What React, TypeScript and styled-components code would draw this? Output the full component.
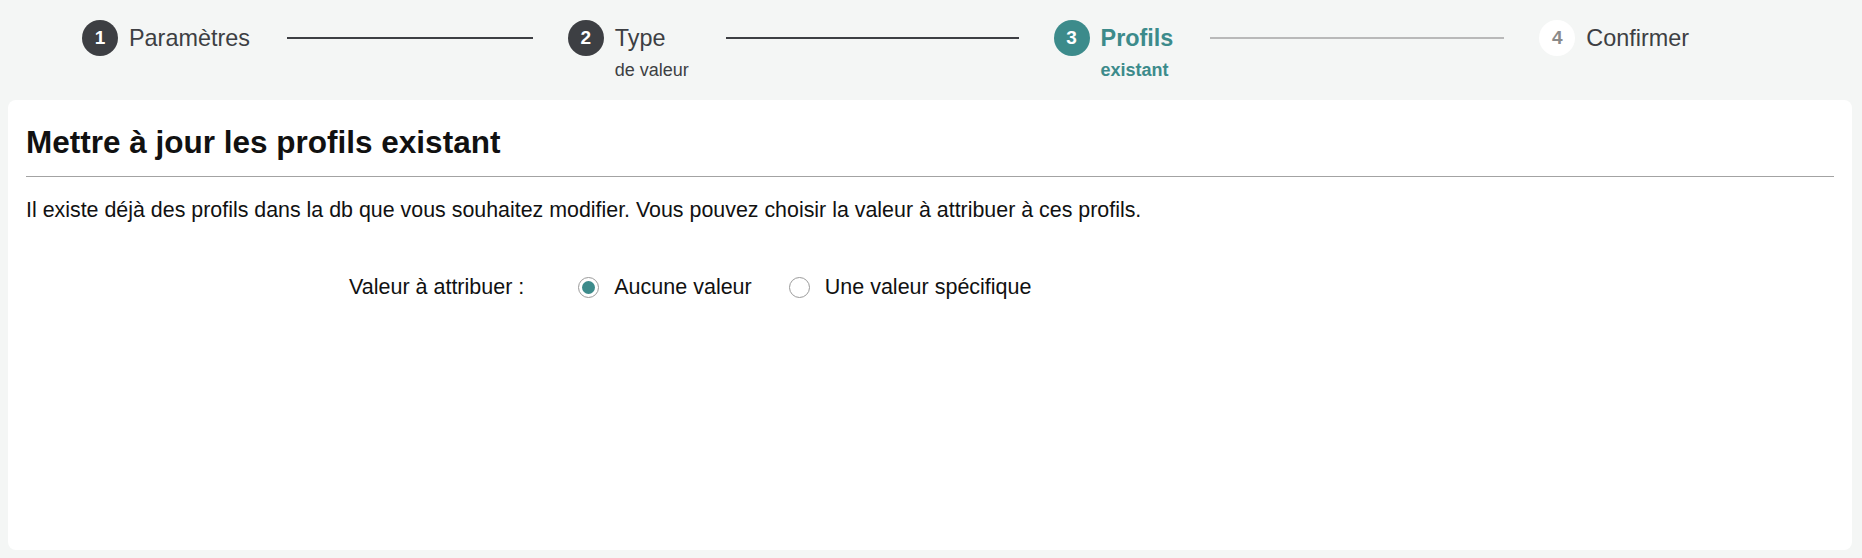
import React from 'react';
import styled, { createGlobalStyle } from 'styled-components';

const GlobalStyle = createGlobalStyle`
  html, body {
    margin: 0;
    padding: 0;
    background: #f4f6f5;
    font-family: 'Liberation Sans', Arial, sans-serif;
    color: #1a1a1a;
  }
`;

type StepStatus = 'finish' | 'process' | 'wait';

interface StepItem {
  title: string;
  description?: string;
  status: StepStatus;
}

const steps: StepItem[] = [
  { title: 'Paramètres', status: 'finish' },
  { title: 'Type', description: 'de valeur', status: 'finish' },
  { title: 'Profils', description: 'existant', status: 'process' },
  { title: 'Confirmer', status: 'wait' },
];

const App: React.FC = () => {
  return (
    <Page>
      <GlobalStyle />
      <StyleSteps>
        {steps.map((step, i) => {
          const last = i === steps.length - 1;
          return (
            <StyleStep key={step.title} last={last}>
              <StyleStepIcon status={step.status}>{i + 1}</StyleStepIcon>
              <StyleStepContent>
                <StyleStepTitle status={step.status}>{step.title}</StyleStepTitle>
                {step.description && (
                  <StyleStepDesc status={step.status}>{step.description}</StyleStepDesc>
                )}
              </StyleStepContent>
              {!last && <StyleTail done={step.status === 'finish'} />}
            </StyleStep>
          );
        })}
      </StyleSteps>

      <StyleCard>
        <StyleHeading>Mettre à jour les profils existant</StyleHeading>
        <StyleText>
          Il existe déjà des profils dans la db que vous souhaitez modifier. Vous pouvez choisir la
          valeur à attribuer à ces profils.
        </StyleText>
        <StyleFormRow>
          <StyleLabel>Valeur à attribuer :</StyleLabel>
          <StyleRadioGroup>
            <StyleRadio>
              <StyleRadioDot checked />
              Aucune valeur
            </StyleRadio>
            <StyleRadio>
              <StyleRadioDot />
              Une valeur spécifique
            </StyleRadio>
          </StyleRadioGroup>
        </StyleFormRow>
      </StyleCard>
    </Page>
  );
};

const Page = styled.div`
  display: flex;
  flex-direction: column;
  height: 558px;
`;

const StyleSteps = styled.div`
  display: flex;
  align-items: flex-start;
  height: 100px;
  box-sizing: border-box;
  padding: 20px 173px 0 82px;
`;

const StyleStep = styled.div<{ last?: boolean }>`
  display: flex;
  align-items: flex-start;
  flex: ${(props) => (props.last ? 'none' : '1')};
`;

const StyleStepIcon = styled.span<{ status: StepStatus }>`
  flex: none;
  width: 36px;
  height: 36px;
  border-radius: 50%;
  display: inline-flex;
  align-items: center;
  justify-content: center;
  font-size: 19px;
  font-weight: bold;
  background: ${(props) =>
    props.status === 'finish' ? '#3d3f43' : props.status === 'process' ? '#3c8b8b' : '#fff'};
  color: ${(props) => (props.status === 'wait' ? '#8a8a8a' : '#fff')};
  margin-right: 11px;
`;

const StyleStepContent = styled.div`
  display: flex;
  flex-direction: column;
`;

const StyleStepTitle = styled.div<{ status: StepStatus }>`
  font-size: 23.4px;
  line-height: 36px;
  white-space: nowrap;
  font-weight: ${(props) => (props.status === 'process' ? 'bold' : 'normal')};
  color: ${(props) => (props.status === 'process' ? '#3c8b8b' : '#3d3f43')};
`;

const StyleStepDesc = styled.div<{ status: StepStatus }>`
  font-size: 18px;
  line-height: 24px;
  margin-top: 2px;
  font-weight: ${(props) => (props.status === 'process' ? 'bold' : 'normal')};
  color: ${(props) => (props.status === 'process' ? '#3c8b8b' : '#3d3f43')};
`;

const StyleTail = styled.div<{ done: boolean }>`
  flex: 1;
  height: 2px;
  margin: 17px 35px 0 37px;
  background: ${(props) => (props.done ? '#3d3f43' : '#b9b9b9')};
`;

const StyleCard = styled.div`
  flex: 1;
  margin: 0 10px 8px 8px;
  background: #fff;
  border-radius: 8px;
  padding: 24px 18px;
`;

const StyleHeading = styled.h2`
  margin: 0;
  font-size: 31.5px;
  line-height: 36px;
  font-weight: bold;
  color: #111;
  padding-bottom: 16px;
  border-bottom: 1px solid #a3a3a3;
`;

const StyleText = styled.p`
  margin: 21px 0 0;
  font-size: 21.4px;
  line-height: 24px;
  color: #111;
`;

const StyleFormRow = styled.div`
  display: flex;
  align-items: center;
  margin-top: 53px;
  padding-left: 323px;
  font-size: 21.5px;
  line-height: 24px;
  color: #111;
`;

const StyleLabel = styled.label`
  margin-right: 54px;
`;

const StyleRadioGroup = styled.div`
  display: flex;
  align-items: center;
  gap: 37px;
`;

const StyleRadio = styled.label`
  display: inline-flex;
  align-items: center;
  gap: 15px;
`;

const StyleRadioDot = styled.span<{ checked?: boolean }>`
  width: 21px;
  height: 21px;
  box-sizing: border-box;
  border-radius: 50%;
  border: 1px solid #9a9a9a;
  background: #fff;
  position: relative;
  &::after {
    content: '';
    display: ${(props) => (props.checked ? 'block' : 'none')};
    position: absolute;
    inset: 3px;
    border-radius: 50%;
    background: #3c8b8b;
  }
`;

export default App;
